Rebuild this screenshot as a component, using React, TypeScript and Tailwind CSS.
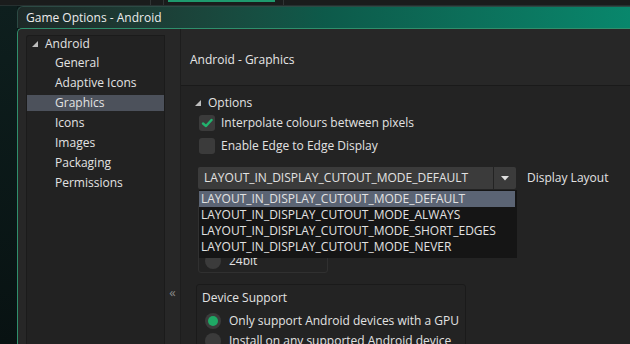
import React from "react";

const Tri = () => (
  <svg width="8" height="8" viewBox="0 0 8 8" className="shrink-0">
    <polygon points="7,1 7,7 1,7" fill="#bdbdbd" />
  </svg>
);

const Check = ({ checked }: { checked?: boolean }) => (
  <div className="w-[16px] h-[16px] rounded-[3px] bg-[#3b3b3b] flex items-center justify-center shrink-0">
    {checked && (
      <svg width="12" height="12" viewBox="0 0 12 12">
        <path d="M2 6.5 L5 9 L10.5 3" stroke="#22b36e" strokeWidth="2.4" fill="none" strokeLinecap="round" strokeLinejoin="round" />
      </svg>
    )}
  </div>
);

const Radio = ({ on }: { on?: boolean }) => (
  <div className="w-[16px] h-[16px] rounded-full bg-[#3b3b3b] flex items-center justify-center shrink-0">
    {on && <div className="w-[10px] h-[10px] rounded-full bg-[#1fa865]" />}
  </div>
);

const sideItems = ["General", "Adaptive Icons", "Graphics", "Icons", "Images", "Packaging", "Permissions"];
const modes = [
  "LAYOUT_IN_DISPLAY_CUTOUT_MODE_DEFAULT",
  "LAYOUT_IN_DISPLAY_CUTOUT_MODE_ALWAYS",
  "LAYOUT_IN_DISPLAY_CUTOUT_MODE_SHORT_EDGES",
  "LAYOUT_IN_DISPLAY_CUTOUT_MODE_NEVER",
];

export default function App() {
  return (
    <div
      className="w-[630px] h-[344px] overflow-hidden bg-[#0b1818] text-[#e2e2e2] text-[12px] leading-[20px] flex flex-col"
      style={{ fontFamily: '"Open Sans", "Noto Sans", sans-serif' }}
    >
      {/* top strip */}
      <div className="h-[6px] bg-[#1a1c1c] flex shrink-0 border-b border-[#263030]">
        <div className="w-[150px]" />
        <div className="w-[14px] border-x border-[#303434]" />
        <div className="w-[4px]" />
        <div className="w-[107px] h-[3px] border-t-2 border-[#1e9a6e]" />
        <div className="w-[8px]" />
        <div className="w-[100px] border-l border-[#303434]" />
      </div>
      <div className="flex flex-1 min-h-0">
        <div className="w-[17px] shrink-0 bg-gradient-to-b from-[#0e1f1e] to-[#081212]" />
        <div className="flex-1 flex flex-col min-w-0">
          {/* title bar */}
          <div className="h-[22px] shrink-0 rounded-tl-[6px] bg-gradient-to-r from-[#1d2927] via-[#0d5a4a] to-[#08876c] border-l border-t border-[#2c4a44] flex items-center pl-[8px] text-[#ececec] whitespace-nowrap">
            Game Options - Android
          </div>
          {/* body */}
          <div className="flex-1 min-h-0 flex bg-[#272727] border-t border-l border-[#2f8f6c] rounded-tl-[5px]">
            <div className="w-[8px] shrink-0" />
            {/* sidebar */}
            <div className="w-[139px] shrink-0 mt-[6px] bg-[#222222] border-l border-t border-r border-[#1b1b1b] rounded-tl-[3px]">
              <div className="h-[16px] flex items-center pl-[4px] gap-[6px]">
                <Tri />
                <span>Android</span>
              </div>
              <div className="mt-[3px] flex flex-col gap-[4px]">
                {sideItems.map((s) => (
                  <div
                    key={s}
                    className={`h-[16px] flex items-center pl-[28px] whitespace-nowrap ${s === "Graphics" ? "bg-[#4c515b]" : ""}`}
                  >
                    {s}
                  </div>
                ))}
              </div>
            </div>
            {/* splitter */}
            <div className="w-[15px] shrink-0 flex items-end justify-center pb-[42px] text-[#8a8a8a] text-[13px]">
              «
            </div>
            {/* right */}
            <div className="flex-1 min-w-0 flex flex-col border-l border-[#1d1d1d]">
              <div className="h-[56px] shrink-0 pt-[21px] pl-[9px] text-[#e6e6e6]">Android - Graphics</div>
              <div className="flex-1 relative bg-[#232323] border-t border-[#1a1a1a] pl-[13px] pt-[7px] whitespace-nowrap">
                <div className="h-[20px] flex items-center gap-[6px]">
                  <Tri />
                  <span>Options</span>
                </div>
                <div className="pl-[5px]">
                  <div className="h-[20px] flex items-center gap-[6px]">
                    <Check checked />
                    <span>Interpolate colours between pixels</span>
                  </div>
                  <div className="h-[20px] mt-[3px] flex items-center gap-[6px]">
                    <Check />
                    <span>Enable Edge to Edge Display</span>
                  </div>
                  <div className="flex items-center mt-[11px] ml-[-1px]">
                    <div className="w-[295px] h-[22px] bg-[#3b3b3b] rounded-l-[2px] flex items-center pl-[6px] overflow-hidden">
                      LAYOUT_IN_DISPLAY_CUTOUT_MODE_DEFAULT
                    </div>
                    <div className="w-[22px] h-[22px] ml-[1px] bg-[#3b3b3b] rounded-r-[2px] flex items-center justify-center">
                      <svg width="8" height="5" viewBox="0 0 8 5">
                        <polygon points="0,0 8,0 4,4.5" fill="#e0e0e0" />
                      </svg>
                    </div>
                    <span className="ml-[11px]">Display Layout</span>
                  </div>
                  {/* colour depth group (partially hidden) */}
                  <div className="w-[130px] h-[69px] mt-[15px] ml-[-1px] border border-[#303030] rounded-[3px] flex flex-col justify-end pb-[1px] pl-[6px]">
                    <div className="h-[20px] flex items-center gap-[8px]">
                      <Radio />
                      <span>24bit</span>
                    </div>
                  </div>
                  {/* device support */}
                  <div className="w-[270px] h-[80px] mt-[11px] ml-[-3px] border border-[#1a1a1a] rounded-[3px] pl-[5px] pt-[3px]">
                    <div className="h-[20px] flex items-center">Device Support</div>
                    <div className="h-[20px] mt-[3px] flex items-center gap-[8px] pl-[3px]">
                      <Radio on />
                      <span>Only support Android devices with a GPU</span>
                    </div>
                    <div className="h-[20px] flex items-center gap-[8px] pl-[3px]">
                      <Radio />
                      <span>Install on any supported Android device</span>
                    </div>
                  </div>
                </div>
                {/* dropdown list overlay */}
                <div className="absolute left-[18px] top-[104px] w-[318px] h-[68px] bg-[#151515] pt-[1px] pr-[2px]">
                  {modes.map((m, i) => (
                    <div
                      key={m}
                      className={`h-[16px] leading-[16px] pl-[2px] ${i === 0 ? "bg-[#5b6474]" : ""}`}
                    >
                      {m}
                    </div>
                  ))}
                </div>
              </div>
            </div>
          </div>
        </div>
      </div>
    </div>
  );
}
